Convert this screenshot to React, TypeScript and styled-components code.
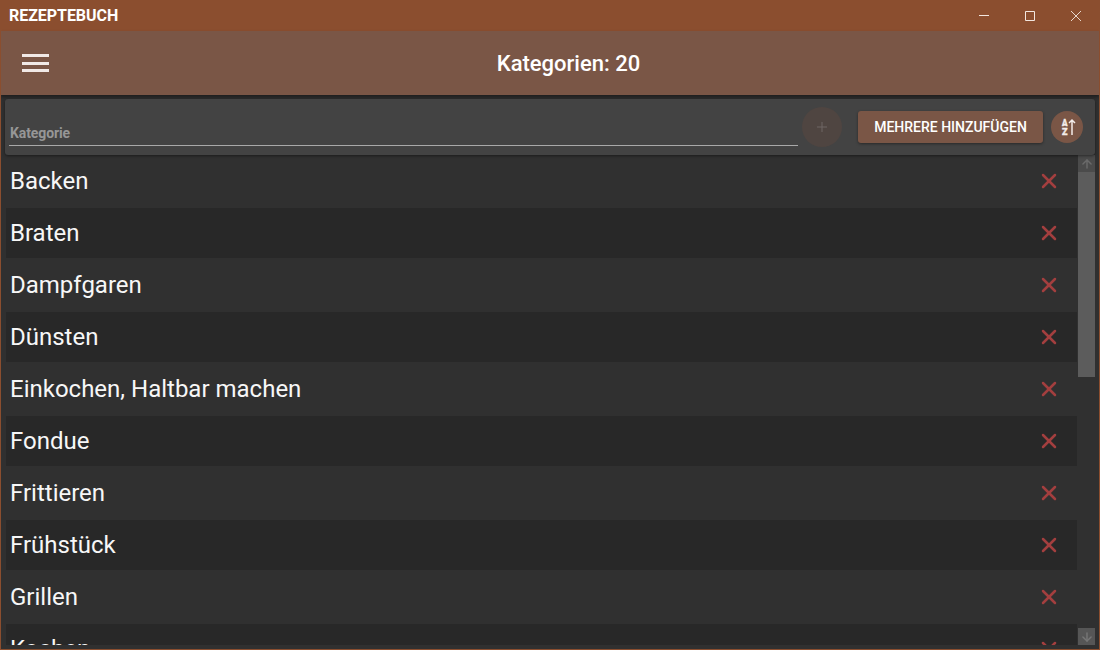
import React from 'react'
import styled, { createGlobalStyle } from 'styled-components'
import { Plus, X, ArrowUp, ArrowDown } from 'lucide-react'

const categories = [
  'Backen',
  'Braten',
  'Dampfgaren',
  'Dünsten',
  'Einkochen, Haltbar machen',
  'Fondue',
  'Frittieren',
  'Frühstück',
  'Grillen',
  'Kochen',
]

const GlobalStyle = createGlobalStyle`
  html, body {
    margin: 0;
    padding: 0;
    height: 100%;
    overflow: hidden;
    background: #303030;
    font-family: Roboto, "Liberation Sans", sans-serif;
  }
  #root { height: 100%; }
`

const Window = styled.div`
  width: 1100px;
  height: 650px;
  box-sizing: border-box;
  border: 1px solid #8b4e2f;
  border-top: 0;
  display: flex;
  flex-direction: column;
  background: #303030;
  color: #fff;
  overflow: hidden;
`

const TitleBar = styled.div`
  height: 31px;
  flex: none;
  margin: 0 -1px;
  background: #8b4e2f;
  display: flex;
  align-items: center;
  justify-content: space-between;
  padding: 0 1px 0 9px;
`

const AppName = styled.div`
  font-size: 16px;
  line-height: 30px;
  font-weight: 700;
  letter-spacing: -0.05px;
`

const WindowControls = styled.div`
  display: flex;
  height: 100%;
`

const WindowButton = styled.div`
  width: 46px;
  height: 31px;
  display: flex;
  align-items: center;
  justify-content: center;
  color: #f3e6df;
`

const Header = styled.header`
  height: 64px;
  flex: none;
  background: #7a5646;
  display: flex;
  align-items: center;
  box-shadow: 0 2px 3px rgba(0, 0, 0, 0.4);
`

const MenuButton = styled.div`
  width: 27px;
  margin-left: 21px;
  display: flex;
  flex-direction: column;
  gap: 4.5px;

  span {
    display: block;
    height: 3px;
    background: #f1e9e6;
  }
`

const HeaderTitle = styled.h1`
  flex: 1;
  margin: 2px 0 0 -11px;
  text-align: center;
  font-size: 22px;
  line-height: 28px;
  font-weight: 500;
  color: #fff;
`

const Content = styled.main`
  flex: 1;
  min-height: 0;
  display: flex;
  flex-direction: column;
  padding: 4px;
`

const Toolbar = styled.div`
  height: 56px;
  flex: none;
  background: #434343;
  border-radius: 3px;
  box-shadow: 0 1px 3px rgba(0, 0, 0, 0.45);
  display: flex;
  align-items: flex-start;
  padding-left: 4px;
  position: relative;
  z-index: 1;
`

const Field = styled.div`
  width: 789px;
  height: 47px;
  box-sizing: border-box;
  border-bottom: 1px solid #a9a9a9;
  display: flex;
  align-items: flex-end;
  padding: 0 0 4px 1px;
  font-size: 14px;
  font-weight: 700;
  letter-spacing: -0.1px;
  line-height: 16px;
  color: #969696;
`

const AddButton = styled.div`
  width: 40px;
  height: 40px;
  margin: 8px 0 0 4px;
  border-radius: 50%;
  background: #4f4541;
  color: #6f6764;
  display: flex;
  align-items: center;
  justify-content: center;
`

const MultiButton = styled.div`
  width: 185px;
  height: 32px;
  margin: 12px 0 0 16px;
  border-radius: 3px;
  background: #7a5646;
  box-shadow: 0 1px 3px rgba(0, 0, 0, 0.4);
  display: flex;
  align-items: center;
  justify-content: center;
  font-size: 14px;
  font-weight: 500;
  color: #fff;
`

const SortButton = styled.div`
  width: 32px;
  height: 32px;
  margin: 12px 0 0 8px;
  border-radius: 50%;
  background: #7a5646;
  display: flex;
  align-items: center;
  justify-content: center;
  color: #f3ece9;
`

const ListArea = styled.div`
  flex: 1;
  min-height: 0;
  display: flex;
  overflow: hidden;
`

const List = styled.div`
  flex: 1;
  min-width: 0;
  padding: 1px 1px 0 1px;
  display: flex;
  flex-direction: column;
  gap: 2px;
  overflow: hidden;
`

const Row = styled.div<{ $odd: boolean }>`
  height: 50px;
  flex: none;
  box-sizing: border-box;
  display: flex;
  align-items: center;
  justify-content: space-between;
  padding: 0 16px 0 4px;
  background: ${p => (p.$odd ? '#282828' : '#303030')};
  font-size: 24px;
  color: #f7f7f7;

  svg {
    color: #a33f3f;
    flex: none;
  }
`

const Scrollbar = styled.div`
  width: 17px;
  flex: none;
  display: flex;
  flex-direction: column;
`

const ScrollArrow = styled.div<{ $active?: boolean }>`
  height: 17px;
  flex: none;
  background: ${p => (p.$active ? '#565656' : '#4b4b4b')};
  color: ${p => (p.$active ? '#767676' : '#6a6a6a')};
  display: flex;
  align-items: center;
  justify-content: center;
`

const ScrollThumb = styled.div`
  height: 205px;
  flex: none;
  background: #5c5c5c;
`

const ScrollTrack = styled.div`
  flex: 1;
`

function SortIcon() {
  return (
    <svg width="18" height="18" viewBox="0 0 18 18" fill="none">
      <text x="4" y="8" fontFamily="Roboto, sans-serif" fontSize="9.5" fontWeight="900" textLength="5.5" lengthAdjust="spacingAndGlyphs" fill="currentColor" stroke="currentColor" strokeWidth="0.35">A</text>
      <text x="4" y="17" fontFamily="Roboto, sans-serif" fontSize="9.5" fontWeight="900" textLength="5.5" lengthAdjust="spacingAndGlyphs" fill="currentColor" stroke="currentColor" strokeWidth="0.35">Z</text>
      <path d="M14 17V2M11 5l3-3 3 3" stroke="currentColor" strokeWidth="1.5" />
    </svg>
  )
}

export default function App() {
  return (
    <>
      <GlobalStyle />
      <Window>
        <TitleBar>
          <AppName>REZEPTEBUCH</AppName>
          <WindowControls>
            <WindowButton>
              <svg width="10" height="10" viewBox="0 0 10 10"><path d="M0 4.5h10" stroke="currentColor" /></svg>
            </WindowButton>
            <WindowButton>
              <svg width="10" height="10" viewBox="0 0 10 10"><path d="M.5.5h9v9h-9z" stroke="currentColor" fill="none" /></svg>
            </WindowButton>
            <WindowButton>
              <svg width="10" height="10" viewBox="0 0 10 10"><path d="M0 0l10 10M10 0 0 10" stroke="currentColor" strokeWidth="0.9" /></svg>
            </WindowButton>
          </WindowControls>
        </TitleBar>
        <Header>
          <MenuButton><span /><span /><span /></MenuButton>
          <HeaderTitle>Kategorien: 20</HeaderTitle>
        </Header>
        <Content>
          <Toolbar>
            <Field>Kategorie</Field>
            <AddButton><Plus size={16} strokeWidth={1.5} /></AddButton>
            <MultiButton>MEHRERE HINZUFÜGEN</MultiButton>
            <SortButton><SortIcon /></SortButton>
          </Toolbar>
          <ListArea>
            <List>
              {categories.map((name, i) => (
                <Row key={name} $odd={i % 2 === 1}>
                  {name}
                  <X size={24} strokeWidth={2.5} />
                </Row>
              ))}
            </List>
            <Scrollbar>
              <ScrollArrow><ArrowUp size={14} strokeWidth={2.5} /></ScrollArrow>
              <ScrollThumb />
              <ScrollTrack />
              <ScrollArrow $active><ArrowDown size={14} strokeWidth={2.5} /></ScrollArrow>
            </Scrollbar>
          </ListArea>
        </Content>
      </Window>
    </>
  )
}
